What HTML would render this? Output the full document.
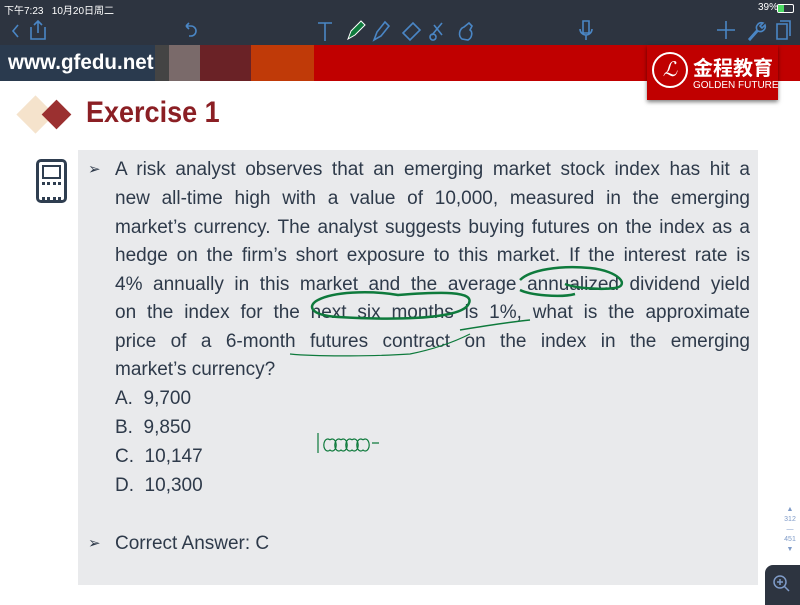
<!DOCTYPE html>
<html><head><meta charset="utf-8"><style>
body{margin:0;width:800px;height:600px;overflow:hidden;background:#fff;position:relative;font-family:"Liberation Sans","Noto Sans CJK SC",sans-serif}
.a{position:absolute}
.ln{position:absolute;left:115px;width:635px;font-size:19px;color:#2e3a4a;text-align:justify;text-align-last:justify;white-space:nowrap;line-height:22px}
.opt{position:absolute;left:115px;font-size:19px;color:#2e3a4a;line-height:22px}
.ic{stroke:#4a86c5;fill:none;stroke-width:1.6}
</style></head><body>
<div class="a" style="left:0;top:0;width:800px;height:45px;background:#2d3440"></div>
<div class="a" style="left:4px;top:2px;font-size:10px;color:#fff">下午7:23&nbsp;&nbsp;&nbsp;10月20日周二</div>
<div class="a" style="left:758px;top:2px;font-size:10px;color:#fff">39%</div>
<div class="a" style="left:777px;top:4px;width:15px;height:7px;border:1px solid #fff;border-radius:2px"><div style="width:6px;height:7px;background:#4cd964"></div></div>
<svg class="a" style="left:0;top:15px" width="800" height="32">
<path class="ic" d="M18 10l-5 6 5 6"/>
<path class="ic" d="M31 12v12h14V12M38 6v12M34 10l4-4 4 4"/>
<path class="ic" d="M186 11h5a5 5 0 010 10h-2M186 11l3-3M186 11l3 3"/>
<path class="ic" d="M318 8h14M325 8v18"/>
<path d="M348 24l3-8 10-10 4 4-10 10z" fill="#0e7a3c" stroke="#fff" stroke-width="1"/>
<path class="ic" d="M374 25l3-8 8-10 4 4-8 10z"/>
<path class="ic" d="M403 18l10-10 7 7-10 10z"/>
<path class="ic" d="M432 20l10-12M434 10l8 10M436 22a3 3 0 100 .1"/>
<path class="ic" d="M462 24c-4-3-3-10 2-12l5-4 3 3-2 4c3 2 2 8-2 10z"/>
<path class="ic" d="M583 6h6v12h-6zM580 14a6 6 0 0012 0M586 20v5"/>
<path class="ic" d="M726 6v18M717 15h18"/>
<path class="ic" d="M749 24l8-9a5 5 0 016-7l-3 3 2 2 3-3a5 5 0 01-7 6l-8 9z"/>
<path class="ic" d="M777 9h10v15h-10zM780 6h10v15"/>
</svg>
<div class="a" style="left:0;top:45px;width:800px;height:36px;background:#c00000"></div>
<div class="a" style="left:0;top:45px;width:155px;height:36px;background:#2a3a4e"></div>
<div class="a" style="left:155px;top:45px;width:14px;height:36px;background:#444"></div>
<div class="a" style="left:169px;top:45px;width:31px;height:36px;background:#7a6a6a"></div>
<div class="a" style="left:200px;top:45px;width:51px;height:36px;background:#6a2226"></div>
<div class="a" style="left:251px;top:45px;width:63px;height:36px;background:#c03a08"></div>
<div class="a" style="left:8px;top:51px;font-size:21px;font-weight:bold;color:#fff;transform:scaleX(.98);transform-origin:left">www.gfedu.net</div>
<div class="a" style="top:45px;height:55px;background:#c00000;box-shadow:0 2px 4px rgba(0,0,0,.5);left:647px;width:131px"></div>
<div class="a" style="left:652px;top:52px;width:36px;height:36px;border-radius:50%;border:2px solid #fff;box-sizing:border-box;color:#fff;font-size:20px;font-style:italic;text-align:center;line-height:32px">ℒ</div>
<div class="a" style="left:693px;top:52px;font-size:20px;font-weight:bold;color:#fff">金程教育</div>
<div class="a" style="left:693px;top:80px;font-size:10px;color:#fff">GOLDEN FUTURE</div>
<div class="a" style="left:22px;top:101px;width:27px;height:27px;background:#f5e3cc;transform:rotate(45deg)"></div>
<div class="a" style="left:46px;top:104px;width:21px;height:21px;background:#9b3030;transform:rotate(45deg)"></div>
<div class="a" style="left:86px;top:96px;font-size:30px;font-weight:bold;color:#8b1f24;transform:scaleX(.9);transform-origin:left">Exercise 1</div>
<div class="a" style="left:78px;top:150px;width:680px;height:435px;background:#e9eaec"></div>
<div class="a" style="left:36px;top:159px;width:31px;height:44px;border:3px solid #2f3e50;border-radius:5px;box-sizing:border-box"><div style="margin:3px;height:10px;border:2px solid #2f3e50"></div><div style="margin:2px 3px;height:12px;border-top:3px dotted #2f3e50;border-bottom:3px dotted #2f3e50"></div></div>
<div class="a" style="left:88px;top:160px;font-size:15px;color:#2e3a4a">➢</div>
<div class="ln" style="top:159px">A risk analyst observes that an emerging market stock index has hit a</div>
<div class="ln" style="top:188px">new all-time high with a value of 10,000, measured in the emerging</div>
<div class="ln" style="top:217px">market’s currency. The analyst suggests buying futures on the index as a</div>
<div class="ln" style="top:245px">hedge on the firm’s short exposure to this market. If the interest rate is</div>
<div class="ln" style="top:274px">4% annually in this market and the average annualized dividend yield</div>
<div class="ln" style="top:302px">on the index for the next six months is 1%, what is the approximate</div>
<div class="ln" style="top:331px">price of a 6-month futures contract on the index in the emerging</div>
<div class="opt" style="top:359px">market’s currency?</div>
<div class="opt" style="top:388px">A.&nbsp;&nbsp;9,700</div>
<div class="opt" style="top:417px">B.&nbsp;&nbsp;9,850</div>
<div class="opt" style="top:446px">C.&nbsp;&nbsp;10,147</div>
<div class="opt" style="top:475px">D.&nbsp;&nbsp;10,300</div>
<div class="a" style="left:88px;top:534px;font-size:15px;color:#2e3a4a">➢</div>
<div class="opt" style="top:533px">Correct Answer: C</div>
<svg class="a" style="left:0;top:0" width="800" height="600" fill="none" stroke="#0e7a3c" stroke-width="2.5">
<path d="M520 280c10-10 40-15 70-12 30 3 40 18 25 20-15 2-40 0-50-4"/>
<path d="M520 290c10 5 40 8 55 4"/>
<path d="M318 300c15-8 50-10 80-5 40-3 80-5 70 10-10 15-80 15-130 12-30-2-30-12-20-17"/>
<path d="M460 330c30-5 50-8 70-10" stroke-width="1.5"/>
<path d="M290 354c30 3 90 2 120 0 20-4 40-10 60-20" stroke-width="1.2"/>
<path d="M318 433v20M330 440a4 6 0 100 10 4 6 0 100-10M341 440a4 6 0 100 10 4 6 0 100-10M352 440a4 6 0 100 10 4 6 0 100-10M363 440a4 6 0 100 10 4 6 0 100-10M372 443h7" stroke-width="1.2"/>
</svg>
<div class="a" style="left:783px;top:505px;font-size:7px;color:#7f9bc8;text-align:center;width:14px;line-height:10px">▲<br>312<br>—<br>451<br>▼</div>
<div class="a" style="left:765px;top:565px;width:40px;height:40px;background:#2d3440;border-radius:8px 0 0 0"></div>
<svg class="a" style="left:770px;top:572px" width="24" height="24"><circle cx="10" cy="10" r="6" stroke="#7f9bc8" fill="none" stroke-width="1.5"/><path d="M14 14l5 5M7 10h6M10 7v6" stroke="#7f9bc8" stroke-width="1.5"/></svg>
</body></html>
